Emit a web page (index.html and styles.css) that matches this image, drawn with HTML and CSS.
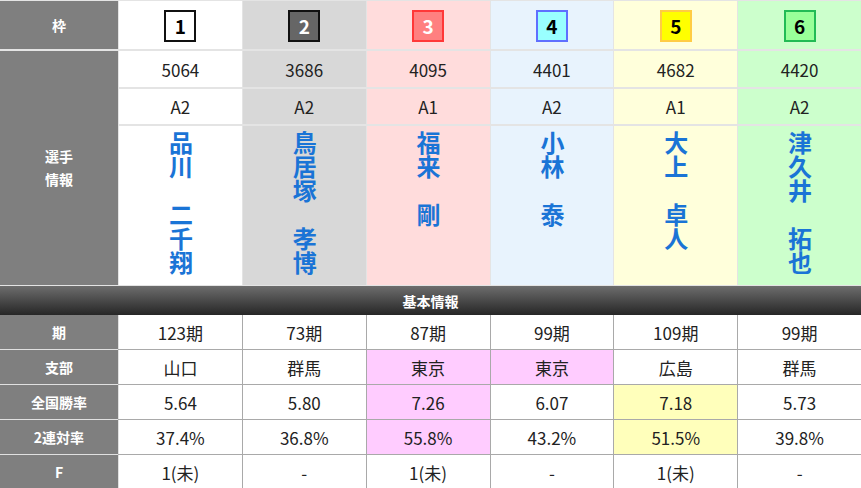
FILE: index.html
```html
<!DOCTYPE html>
<html lang="ja">
<head>
<meta charset="utf-8">
<link rel="stylesheet" href="styles.css">
</head>
<body>
<div class="top">
  <div class="lbl">枠</div>
  <div class="c c1"><span class="badge b1">1</span></div>
  <div class="c c2"><span class="badge b2">2</span></div>
  <div class="c c3"><span class="badge b3">3</span></div>
  <div class="c c4"><span class="badge b4">4</span></div>
  <div class="c c5"><span class="badge b5">5</span></div>
  <div class="c c6"><span class="badge b6">6</span></div>

  <div class="lbl span3">選手<br>情報</div>
  <div class="c c1 txt">5064</div>
  <div class="c c2 txt">3686</div>
  <div class="c c3 txt">4095</div>
  <div class="c c4 txt">4401</div>
  <div class="c c5 txt">4682</div>
  <div class="c c6 txt">4420</div>

  <div class="c c1 txt">A2</div>
  <div class="c c2 txt">A2</div>
  <div class="c c3 txt">A1</div>
  <div class="c c4 txt">A2</div>
  <div class="c c5 txt">A1</div>
  <div class="c c6 txt">A2</div>

  <div class="c c1 namecell"><span class="name">品川　二千翔</span></div>
  <div class="c c2 namecell"><span class="name">鳥居塚　孝博</span></div>
  <div class="c c3 namecell"><span class="name">福来　剛</span></div>
  <div class="c c4 namecell"><span class="name">小林　泰</span></div>
  <div class="c c5 namecell"><span class="name">大上　卓人</span></div>
  <div class="c c6 namecell"><span class="name">津久井　拓也</span></div>
</div>

<div class="banner">基本情報</div>

<div class="bottom">
  <div class="lbl2">期</div>
  <div class="d">123期</div>
  <div class="d">73期</div>
  <div class="d">87期</div>
  <div class="d">99期</div>
  <div class="d">109期</div>
  <div class="d">99期</div>

  <div class="lbl2">支部</div>
  <div class="d">山口</div>
  <div class="d">群馬</div>
  <div class="d pink">東京</div>
  <div class="d pink">東京</div>
  <div class="d">広島</div>
  <div class="d">群馬</div>

  <div class="lbl2">全国勝率</div>
  <div class="d">5.64</div>
  <div class="d">5.80</div>
  <div class="d pink">7.26</div>
  <div class="d">6.07</div>
  <div class="d yellow">7.18</div>
  <div class="d">5.73</div>

  <div class="lbl2">2連対率</div>
  <div class="d">37.4%</div>
  <div class="d">36.8%</div>
  <div class="d pink">55.8%</div>
  <div class="d">43.2%</div>
  <div class="d yellow">51.5%</div>
  <div class="d">39.8%</div>

  <div class="lbl2">F</div>
  <div class="d">1(未)</div>
  <div class="d">-</div>
  <div class="d">1(未)</div>
  <div class="d">-</div>
  <div class="d">1(未)</div>
  <div class="d">-</div>
</div>
</body>
</html>
```

FILE: styles.css
```css
html, body {
  margin: 0;
  padding: 0;
  background: #ffffff;
}
body {
  width: 861px;
  height: 488px;
  overflow: hidden;
  font-family: "Noto Sans CJK JP", "Noto Sans", sans-serif;
  color: #222222;
}

.top {
  display: grid;
  grid-template-columns: 118px repeat(6, 1fr);
  grid-template-rows: 48px 36px 35px 159px;
  column-gap: 1px;
  row-gap: 2px;
  padding: 1px 0 1px 0;
  background: #e4e4e4;
}

.lbl {
  background: #7f7f7f;
  color: #ffffff;
  font-weight: 700;
  font-size: 14px;
  line-height: 23px;
  display: flex;
  align-items: center;
  justify-content: center;
  text-align: center;
}
.span3 {
  grid-row: 2 / span 3;
}

.c {
  display: flex;
  align-items: center;
  justify-content: center;
}
.c1 { background: #ffffff; }
.c2 { background: #d8d8d8; }
.c3 { background: #ffdcdc; }
.c4 { background: #e8f3fd; }
.c5 { background: #ffffdb; }
.c6 { background: #ccffcc; }

.txt {
  font-size: 17px;
}

.badge {
  box-sizing: border-box;
  width: 32px;
  height: 32px;
  display: flex;
  align-items: center;
  justify-content: center;
  font-size: 19px;
  font-weight: 700;
  border: 2px solid #000;
  margin-top: 1px;
}
.b1 { background: #ffffff; color: #000; border-color: #111; }
.b2 { background: #666666; color: #fff; border-color: #111; }
.b3 { background: #ff8080; color: #fff; border-color: #ff3838; }
.b4 { background: #99ffff; color: #000; border-color: #5f6fff; }
.b5 { background: #ffff00; color: #000; border-color: #ffcc44; }
.b6 { background: #99ff99; color: #000; border-color: #22bb55; }

.namecell {
  align-items: flex-start;
}
.name {
  writing-mode: vertical-rl;
  text-orientation: upright;
  height: 150px;
  margin-top: 5px;
  font-size: 24px;
  line-height: 24px;
  font-weight: 700;
  color: #1a74d6;
}

.banner {
  height: 29px;
  background: linear-gradient(#6d6d6d, #262626);
  color: #ffffff;
  font-weight: 700;
  font-size: 14px;
  display: flex;
  align-items: center;
  justify-content: center;
}

.bottom {
  display: grid;
  grid-template-columns: 118px repeat(6, 1fr);
  grid-auto-rows: 34px;
  column-gap: 1px;
  row-gap: 1px;
  background: #a9a9a9;
  border-bottom: 1px solid #a9a9a9;
}
.lbl2 {
  background: #7f7f7f;
  color: #ffffff;
  font-weight: 700;
  font-size: 14px;
  display: flex;
  align-items: center;
  justify-content: center;
  box-shadow: 1px 0 0 #e0e0e0, 0 1px 0 #e0e0e0;
}
.d {
  background: #ffffff;
  font-size: 17px;
  display: flex;
  align-items: center;
  justify-content: center;
}
.pink { background: #ffccff; }
.yellow { background: #ffffbb; }
```
